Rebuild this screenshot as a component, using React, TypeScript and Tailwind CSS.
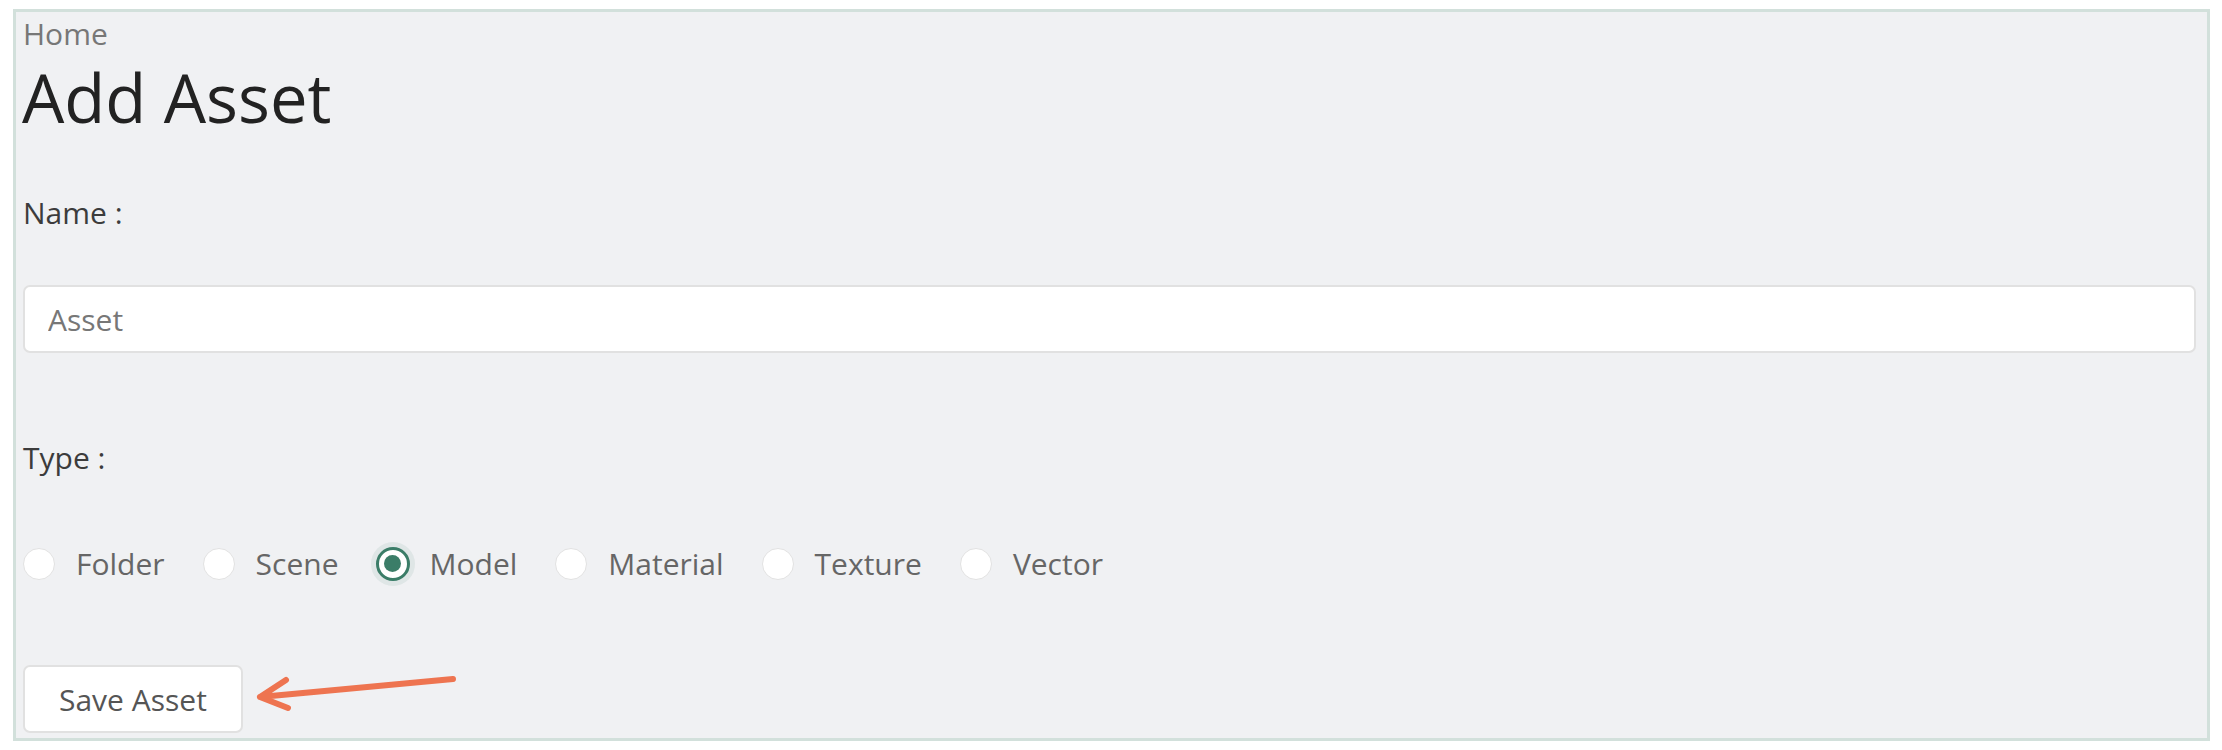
import { useState } from 'react'

const types = ['Folder', 'Scene', 'Model', 'Material', 'Texture', 'Vector']

// ── Radio option ─────────────────────────────────────────────────────────────
function Radio({ label, checked, onPick }: { label: string; checked: boolean; onPick: () => void }) {
  return (
    <label className="flex items-center gap-[21px] cursor-pointer" onClick={onPick}>
      {checked ? (
        <span className="w-[34px] h-[34px] -mx-[1px] rounded-full flex items-center justify-center bg-white border-[3px] border-[#3b7d68] shadow-[0_0_0_5px_rgba(59,125,104,0.09)]">
          <span className="w-[17px] h-[17px] rounded-full bg-[#3b7d68]" />
        </span>
      ) : (
        <span className="w-[32px] h-[32px] rounded-full bg-white border border-[#e2e2e2]" />
      )}
      <span className="text-[30px] leading-[41px] text-[#666]">{label}</span>
    </label>
  )
}

// ── AddAsset page ────────────────────────────────────────────────────────────
export default function App() {
  const [type, setType] = useState('Model')

  return (
    <div className="bg-white pt-[9px] pl-[13px] pr-[12px] h-[750px] font-['Open_Sans',sans-serif]">
      <div className="h-[732px] border-[3px] border-[#d2e0db] bg-[#f0f1f3] pl-[7px] pr-[11px]">

        {/* Breadcrumb + title */}
        <div className="mt-[1px] text-[30px] leading-[41px] text-[#777]">Home</div>
        <h1 className="mt-[3px] text-[67px] leading-[80px] text-[#222] -ml-[1px]">Add Asset</h1>

        {/* Name */}
        <div className="mt-[55px] text-[30px] leading-[41px] text-[#3c3c3c]">Name :</div>
        <input
          className="mt-[52px] w-full h-[68px] px-[23px] bg-white border-2 border-[#e1e1e1] rounded-[7px] text-[30px] text-[#444] placeholder:text-[#777] outline-none"
          placeholder="Asset"
        />

        {/* Type */}
        <div className="mt-[84px] text-[30px] leading-[41px] text-[#3c3c3c]">Type :</div>
        <div className="mt-[65px] flex items-center gap-[38px]">
          {types.map((t) => (
            <Radio key={t} label={t} checked={type === t} onPick={() => setType(t)} />
          ))}
        </div>

        {/* Save + annotation arrow */}
        <div className="relative mt-[81px]">
          <button className="h-[68px] px-[34px] bg-white border-2 border-[#e1e1e1] rounded-[7px] text-[30px] text-[#555]">
            Save Asset
          </button>
          <svg className="absolute left-[230px] top-[5px]" width="210" height="45" viewBox="0 0 210 45" fill="none">
            <path
              d="M200 9 L7 27 M33 10 L7 27 L35 38"
              stroke="#ee7450"
              strokeWidth="6"
              strokeLinecap="round"
              strokeLinejoin="round"
            />
          </svg>
        </div>
      </div>
    </div>
  )
}
